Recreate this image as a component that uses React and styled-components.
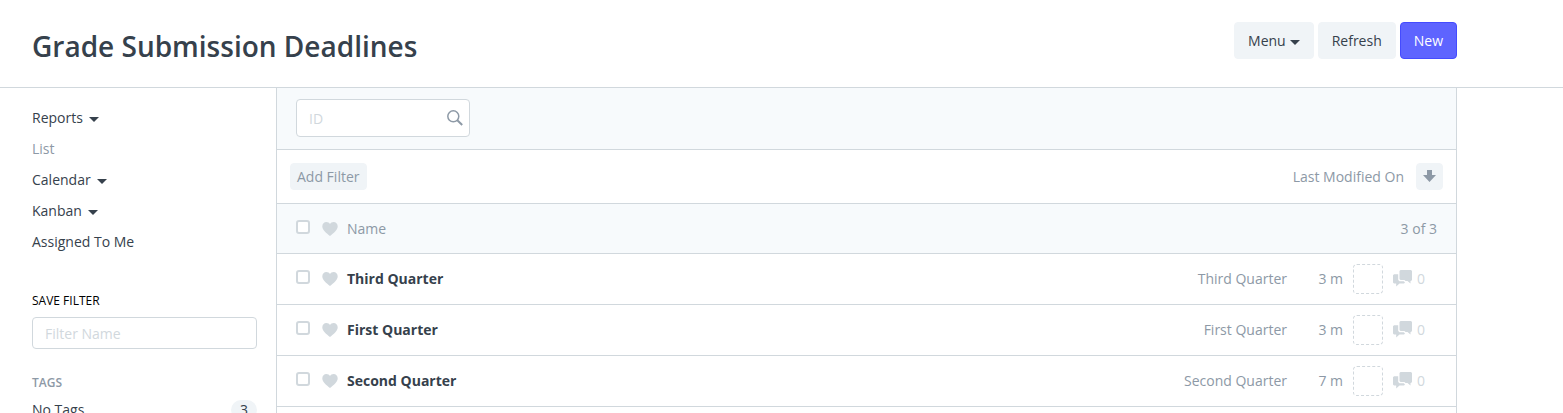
import React from "react";
import styled, { createGlobalStyle, ThemeProvider } from "styled-components";

const theme = {
  color: {
    text: "#36414c",
    muted: "#8d99a6",
    light: "#d1d8dd",
    button: "#f0f4f7",
    panel: "#f7fafc",
    primary: "#5e64ff",
    primaryBorder: "#444bff"
  },
  font: '"Open Sans", "Noto Sans", sans-serif'
};

const GlobalStyle = createGlobalStyle`
  *, *::before, *::after {
    box-sizing: border-box;
  }

  body {
    margin: 0;
    background: #fff;
    color: ${theme.color.text};
    font: 14px/20px ${theme.font};
  }

  button, input {
    font: inherit;
    color: inherit;
  }

  input::placeholder {
    color: ${theme.color.light};
    opacity: 1;
  }
`;

const PageHead = styled.header`
  height: 88px;
  border-bottom: 1px solid ${p => p.theme.color.light};
`;

const HeadInner = styled.div`
  display: flex;
  align-items: flex-start;
  justify-content: space-between;
  padding: 22px 0 0 32px;
  margin-right: 106px;
`;

const Title = styled.h1`
  margin: 4px 0 0;
  font-size: 28px;
  line-height: 40px;
  font-weight: 600;
`;

const Actions = styled.div`
  display: flex;
  gap: 4px;
`;

const Button = styled.button`
  display: flex;
  align-items: center;
  gap: 4px;
  height: 37px;
  padding: 0 13px;
  border: 1px solid
    ${p => (p.$primary ? p.theme.color.primaryBorder : p.theme.color.button)};
  border-radius: 4px;
  background: ${p =>
    p.$primary ? p.theme.color.primary : p.theme.color.button};
  color: ${p => (p.$primary ? "#fff" : p.theme.color.text)};
  cursor: pointer;
`;

const SmallButton = styled(Button)`
  height: 27px;
  padding: 0 6px;
  color: ${p => p.theme.color.muted};
`;

const Body = styled.div`
  display: flex;
  align-items: stretch;
  margin-right: 106px;
`;

const Sidebar = styled.aside`
  flex: 0 0 276px;
  padding: 14px 19px 0 32px;
`;

const Menu = styled.ul`
  list-style: none;
  margin: 0;
  padding: 0;
`;

const MenuItem = styled.li`
  display: flex;
  align-items: center;
  height: 31px;
`;

const MenuLink = styled.a`
  display: flex;
  align-items: center;
  gap: 6px;
  color: ${p => (p.$active ? p.theme.color.muted : p.theme.color.text)};
  text-decoration: none;
`;

const SaveLabel = styled.label`
  display: block;
  margin: 34px 0 6px;
  font-size: 12px;
  color: #000;
`;

const TextInput = styled.input`
  display: block;
  width: 100%;
  height: ${p => (p.$tall ? 38 : 32)}px;
  padding: 0 12px;
  border: 1px solid ${p => p.theme.color.light};
  border-radius: 4px;
  background: #fff;
  outline: none;
`;

const TagsTitle = styled.h2`
  margin: 24px 0 7px;
  font-size: 12px;
  line-height: 20px;
  font-weight: 600;
  color: ${p => p.theme.color.muted};
`;

const TagRow = styled.div`
  display: flex;
  align-items: center;
  justify-content: space-between;
`;

const Badge = styled.span`
  min-width: 26px;
  border-radius: 10px;
  background: ${p => p.theme.color.button};
  text-align: center;
`;

const List = styled.main`
  flex: 1;
  min-width: 0;
  border: solid ${p => p.theme.color.light};
  border-width: 0 1px;
`;

const Bar = styled.div`
  display: flex;
  align-items: center;
  justify-content: space-between;
  height: ${p => p.$height}px;
  padding: 0 13px;
  border-bottom: 1px solid ${p => p.theme.color.light};
  background: ${p => (p.$shaded ? p.theme.color.panel : "#fff")};
  color: ${p => p.theme.color.muted};
`;

const SearchBar = styled(Bar)`
  align-items: flex-start;
  padding: 11px 19px 0;
`;

const ListRow = styled(Bar)`
  padding: 0 19px;
`;

const SearchField = styled.div`
  position: relative;
  width: 174px;

  svg {
    position: absolute;
    top: 11px;
    right: 7px;
  }
`;

const Sort = styled.div`
  display: flex;
  align-items: center;
  gap: 12px;
`;

const Subject = styled.div`
  display: flex;
  align-items: center;
`;

const Check = styled.input`
  appearance: none;
  width: 14px;
  height: 14px;
  margin: 0 12px 4px 0;
  border: 2px solid ${p => p.theme.color.light};
  border-radius: 3px;
  background: #fff;
`;

const Name = styled.a`
  margin-left: 9px;
  color: ${p => p.theme.color.text};
  font-weight: 700;
  text-decoration: none;
`;

const ColumnTitle = styled.span`
  margin-left: 9px;
`;

const Meta = styled.div`
  display: flex;
  align-items: center;
  padding-right: 12px;
`;

const Age = styled.span`
  width: 56px;
  text-align: right;
`;

const Assignee = styled.span`
  width: 30px;
  height: 30px;
  margin: 0 10px;
  border: 1px dashed ${p => p.theme.color.light};
  border-radius: 4px;
`;

const Comments = styled.span`
  display: flex;
  align-items: center;
  gap: 5px;
  color: ${p => p.theme.color.light};
`;

const Caret = () => (
  <svg width="10" height="8" viewBox="0 0 10 8" fill="currentColor">
    <path d="M0 3h10L5 8z" />
  </svg>
);

const HeartIcon = () => (
  <svg width="16" height="16" viewBox="0 0 16 16" fill={theme.color.light}>
    <path d="M8 15C4.500 12.300 0.300 9.300 0.300 5.300C0.300 2.700 2.200 0.900 4.300 0.900C6 0.900 7.400 1.800 8 3C8.600 1.800 10 0.900 11.700 0.900C13.800 0.900 15.700 2.700 15.700 5.300C15.700 9.300 11.500 12.300 8 15z" />
  </svg>
);

const SearchIcon = () => (
  <svg
    width="16"
    height="16"
    viewBox="0 0 16 16"
    fill="none"
    stroke={theme.color.muted}
  >
    <circle cx="6.300" cy="6.300" r="5.500" strokeWidth="1.500" />
    <path d="M10.300 10.300l4.900 4.700" strokeWidth="2" />
  </svg>
);

const ArrowDownIcon = () => (
  <svg width="13" height="16" viewBox="0 0 13 16" fill="currentColor">
    <path d="M4 1h5v5h4L6.500 13 0 6h4z" />
  </svg>
);

const CommentsIcon = () => (
  <svg width="19" height="18" viewBox="0 0 19 18" fill="currentColor">
    <path d="M7.500 0H18l1 1v9l-1 1h-0.500v2.500L14.500 11h-2l-1-1H7.500l-1-1V1z" />
    <path d="M1 4.200h4.200V10l1.300 1.300h4.300l1.200 1.200-1 1H6.500L3.200 16.500V13.500H1l-1-1V5.200z" />
  </svg>
);

const views = [
  { label: "Reports", dropdown: true },
  { label: "List", active: true },
  { label: "Calendar", dropdown: true },
  { label: "Kanban", dropdown: true },
  { label: "Assigned To Me" }
];

const deadlines = [
  { name: "Third Quarter", age: "3 m", comments: 0 },
  { name: "First Quarter", age: "3 m", comments: 0 },
  { name: "Second Quarter", age: "7 m", comments: 0 }
];

export default function App() {
  return (
    <ThemeProvider theme={theme}>
      <GlobalStyle />
      <PageHead>
        <HeadInner>
          <Title>Grade Submission Deadlines</Title>
          <Actions>
            <Button>
              Menu <Caret />
            </Button>
            <Button>Refresh</Button>
            <Button $primary>New</Button>
          </Actions>
        </HeadInner>
      </PageHead>
      <Body>
        <Sidebar>
          <Menu>
            {views.map(view => (
              <MenuItem key={view.label}>
                <MenuLink href="#" $active={view.active}>
                  {view.label}
                  {view.dropdown && <Caret />}
                </MenuLink>
              </MenuItem>
            ))}
          </Menu>
          <SaveLabel htmlFor="filter-name">SAVE FILTER</SaveLabel>
          <TextInput id="filter-name" placeholder="Filter Name" />
          <TagsTitle>TAGS</TagsTitle>
          <TagRow>
            <span>No Tags</span>
            <Badge>3</Badge>
          </TagRow>
        </Sidebar>
        <List>
          <SearchBar $height={62} $shaded>
            <SearchField>
              <TextInput $tall placeholder="ID" aria-label="ID" />
              <SearchIcon />
            </SearchField>
          </SearchBar>
          <Bar $height={54}>
            <SmallButton>Add Filter</SmallButton>
            <Sort>
              <span>Last Modified On</span>
              <SmallButton aria-label="Sort descending">
                <ArrowDownIcon />
              </SmallButton>
            </Sort>
          </Bar>
          <ListRow $height={50} $shaded>
            <Subject>
              <Check type="checkbox" aria-label="Select all" />
              <HeartIcon />
              <ColumnTitle>Name</ColumnTitle>
            </Subject>
            <span>3 of 3</span>
          </ListRow>
          {deadlines.map(item => (
            <ListRow key={item.name} $height={51}>
              <Subject>
                <Check type="checkbox" aria-label={`Select ${item.name}`} />
                <HeartIcon />
                <Name href="#">{item.name}</Name>
              </Subject>
              <Meta>
                <span>{item.name}</span>
                <Age>{item.age}</Age>
                <Assignee />
                <Comments>
                  <CommentsIcon />
                  {item.comments}
                </Comments>
              </Meta>
            </ListRow>
          ))}
        </List>
      </Body>
    </ThemeProvider>
  );
}
